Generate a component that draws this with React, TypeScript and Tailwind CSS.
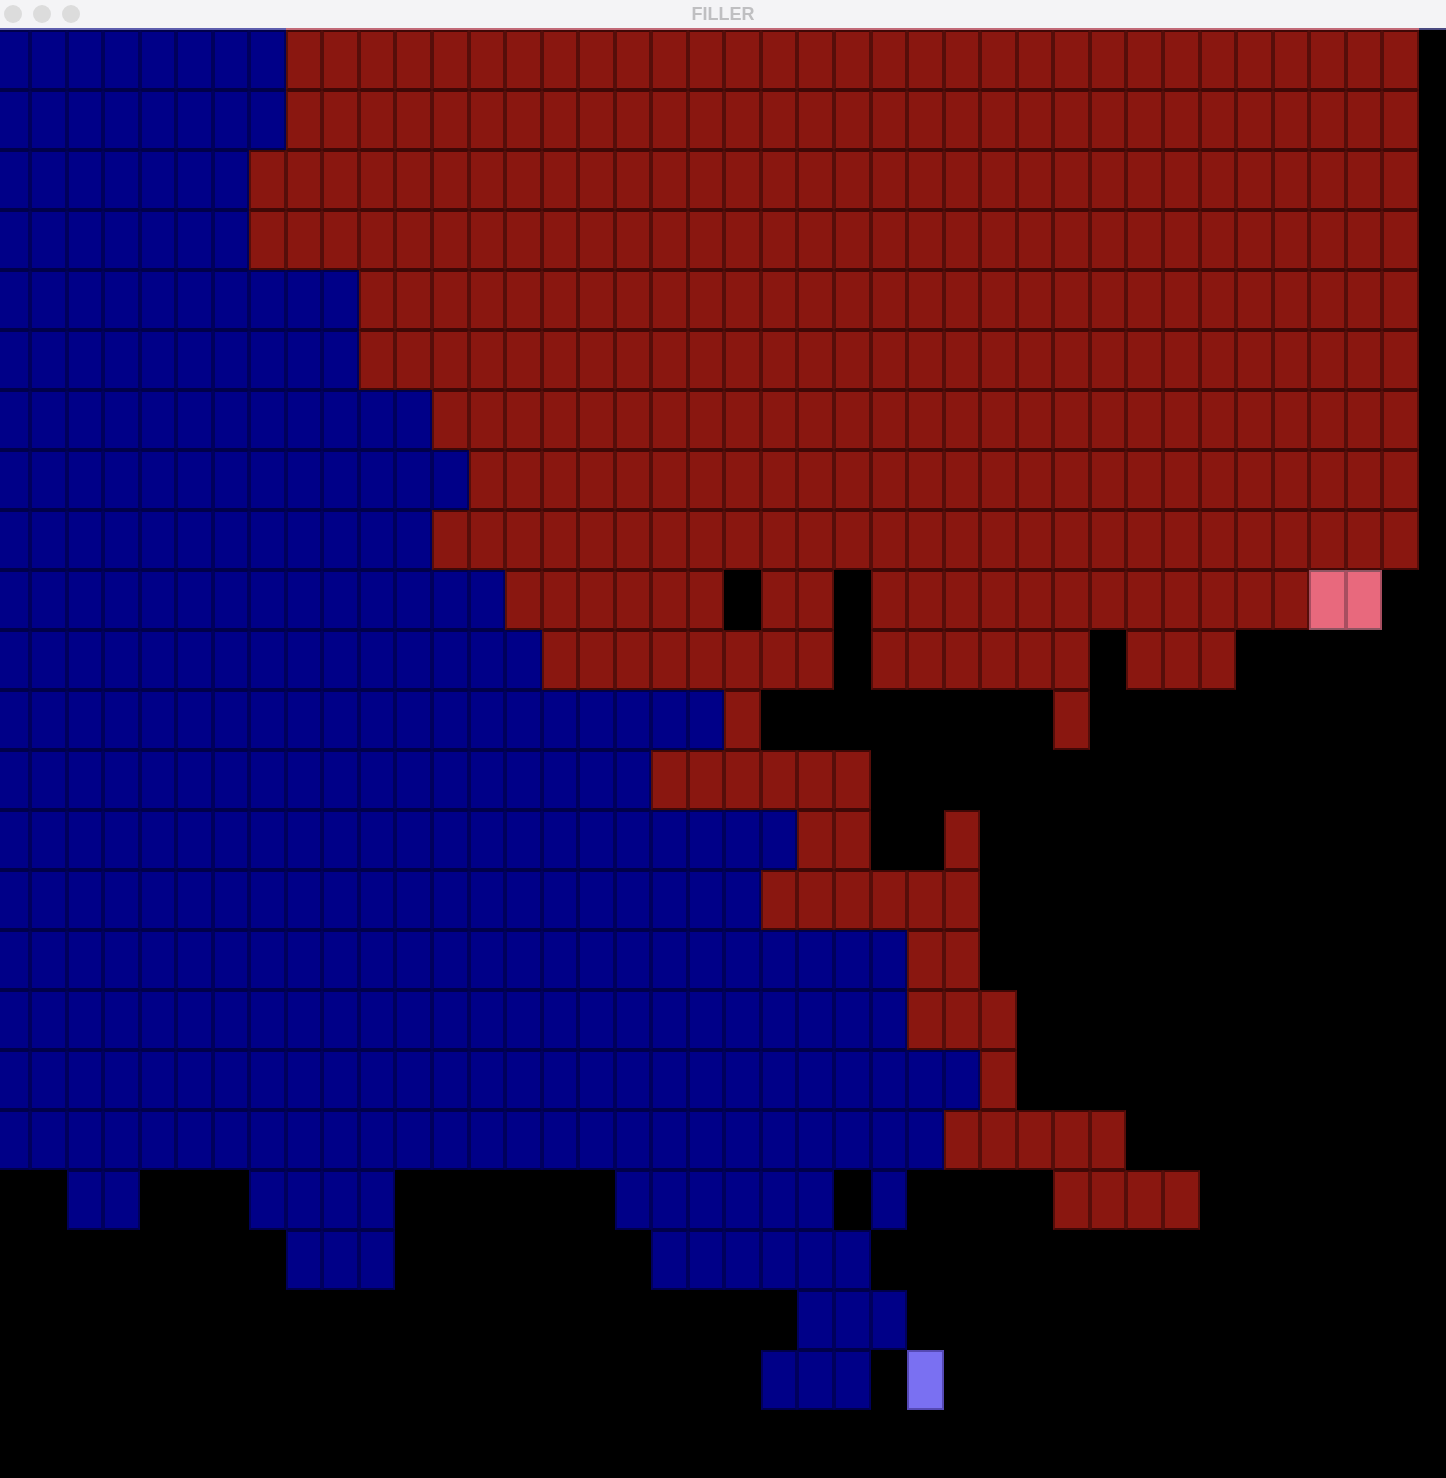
const COLS = 39;

type Kind = 'b' | 'r' | 'p' | 'l';

// each row is a list of [start column, end column, kind]
const ROWS: [number, number, Kind][][] = [
  [[0, 8, 'b'], [8, 39, 'r']],
  [[0, 8, 'b'], [8, 39, 'r']],
  [[0, 7, 'b'], [7, 39, 'r']],
  [[0, 7, 'b'], [7, 39, 'r']],
  [[0, 10, 'b'], [10, 39, 'r']],
  [[0, 10, 'b'], [10, 39, 'r']],
  [[0, 12, 'b'], [12, 39, 'r']],
  [[0, 13, 'b'], [13, 39, 'r']],
  [[0, 12, 'b'], [12, 39, 'r']],
  [[0, 14, 'b'], [14, 20, 'r'], [21, 23, 'r'], [24, 36, 'r'], [36, 38, 'p']],
  [[0, 15, 'b'], [15, 23, 'r'], [24, 30, 'r'], [31, 34, 'r']],
  [[0, 20, 'b'], [20, 21, 'r'], [29, 30, 'r']],
  [[0, 18, 'b'], [18, 24, 'r']],
  [[0, 22, 'b'], [22, 24, 'r'], [26, 27, 'r']],
  [[0, 21, 'b'], [21, 27, 'r']],
  [[0, 25, 'b'], [25, 27, 'r']],
  [[0, 25, 'b'], [25, 28, 'r']],
  [[0, 27, 'b'], [27, 28, 'r']],
  [[0, 26, 'b'], [26, 31, 'r']],
  [[2, 4, 'b'], [7, 11, 'b'], [17, 23, 'b'], [24, 25, 'b'], [29, 33, 'r']],
  [[8, 11, 'b'], [18, 24, 'b']],
  [[22, 25, 'b']],
  [[21, 24, 'b'], [25, 26, 'l']],
  [],
];

const KIND_STYLE: Record<Kind, string> = {
  b: 'bg-[#000088] border-x-[#00005c] border-y-[#00004a]',
  r: 'bg-[#8a1710] border-x-[#560e0a] border-y-[#400806]',
  p: 'bg-[#e8697d] border-x-[#a84e60] border-y-[#8f5562]',
  l: 'bg-[#7a70f2] border-x-[#5549b4] border-y-[#5549b4]',
};

function kindAt(row: number, col: number): Kind | null {
  const run = ROWS[row].find(([s, e]) => col >= s && col < e);
  return run ? run[2] : null;
}

function Cell({ kind, first }: { kind: Kind | null; first: boolean }) {
  if (!kind) return <div className="bg-black" />;
  return <div className={`border-2 ${first ? 'border-l-0' : ''} ${KIND_STYLE[kind]}`} />;
}

function TitleBar() {
  return (
    <div className="relative flex h-7 items-center bg-[#f4f4f6] pl-1">
      <div className="flex gap-[11px]">
        <span className="h-[18px] w-[18px] rounded-full bg-[#dcdcdc]" />
        <span className="h-[18px] w-[18px] rounded-full bg-[#dcdcdc]" />
        <span className="h-[18px] w-[18px] rounded-full bg-[#dcdcdc]" />
      </div>
      <span className="absolute inset-x-0 text-center font-['Liberation_Sans',sans-serif] text-[18px] leading-7 font-bold text-[#bfbfc1] blur-[0.4px]">
        FILLER
      </span>
    </div>
  );
}

export default function App() {
  return (
    <div className="min-h-[1478px] w-[1446px] overflow-hidden bg-black">
      <TitleBar />
      <div className="flex h-0.5">
        <div className="w-[286px] bg-[#5f5fae]" />
        <div className="w-[1133px] bg-[#c26a78]" />
        <div className="flex-1 bg-[#4a4a80]" />
      </div>
      <div className="grid grid-cols-[30px_repeat(38,36.55px)] auto-rows-[60px]">
        {ROWS.map((_, r) =>
          Array.from({ length: COLS }, (_, c) => (
            <Cell key={`${r}-${c}`} kind={kindAt(r, c)} first={c === 0} />
          ))
        )}
      </div>
    </div>
  );
}
